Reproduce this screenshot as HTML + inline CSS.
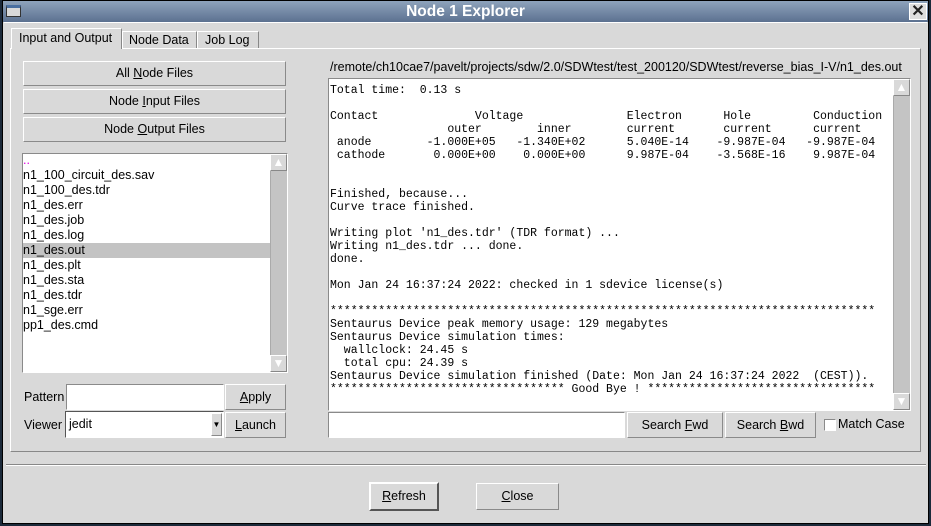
<!DOCTYPE html><html><head><style>
*{box-sizing:border-box;margin:0;padding:0}
body{width:931px;height:526px;background:#1c2a3a;font-family:"Liberation Sans",sans-serif;font-size:12.5px;color:#000;position:relative;overflow:hidden}
.a{position:absolute}
.win{left:2px;top:0;width:927px;height:524px;background:#d9d9d9;border:1px solid #000}
.title{left:3px;top:1px;width:925px;height:21px;background:linear-gradient(#8ea3bc,#5c7190);color:#fff;font-weight:bold;font-size:15.5px;text-align:center;line-height:21px}
.btn{background:#d9d9d9;border:1px solid;border-color:#fff #8a8a8a #8a8a8a #fff;text-align:center;font-size:12.5px}
.sunk{background:#fff;border:1px solid;border-color:#8a8a8a #fff #fff #8a8a8a}
.mono{font-family:"Liberation Mono",monospace;font-size:11.5px;line-height:13px;white-space:pre}
.sb{background:#c4c4c4;border-left:1px solid #aaa}
.arr{width:17px;height:17px;background:#d9d9d9;border:1px solid;border-color:#fff #888 #888 #fff}
</style></head><body>
<div class="a win"></div>
<div class="a title">Node 1 Explorer</div>
<div class="a" style="left:6px;top:5px;width:15px;height:12px;background:#d9d9d9;border:1px solid #333;border-top:3px solid #4a6fa0"></div>
<div class="a" style="left:909px;top:3px;width:18px;height:17px;background:#ddd;border:1px solid #fff;font-size:16px;line-height:15px;text-align:center;color:#222;font-weight:bold">✕</div>
<div class="a" style="left:4px;top:22px;width:923px;height:1px;background:#fff"></div>
<div class="a" style="left:10px;top:48px;width:911px;height:404px;border:1px solid;border-color:#fff #888 #888 #fff"></div>
<div class="a" style="left:11px;top:28px;width:111px;height:21px;background:#d9d9d9;border:1px solid;border-bottom:none;border-color:#fff #888 #888 #fff;padding:2px 0 0 7px">Input and Output</div>
<div class="a" style="left:122px;top:31px;width:75px;height:17px;border:1px solid;border-bottom:none;border-color:#fff #888 #888 #fff;padding:1px 0 0 6px">Node Data</div>
<div class="a" style="left:197px;top:31px;width:62px;height:17px;border:1px solid;border-bottom:none;border-color:#fff #888 #888 #fff;padding:1px 0 0 7px">Job Log</div>
<div class="a btn" style="left:23px;top:61px;width:263px;height:25px;line-height:23px">All <u>N</u>ode Files</div>
<div class="a btn" style="left:23px;top:89px;width:263px;height:25px;line-height:23px">Node <u>I</u>nput Files</div>
<div class="a btn" style="left:23px;top:117px;width:263px;height:25px;line-height:23px">Node <u>O</u>utput Files</div>
<div class="a sunk" style="left:22px;top:153px;width:266px;height:220px"></div>
<div class="a" style="left:23px;top:154px;width:247px;line-height:15px">
<div style="color:#e000e0;height:14px;line-height:12px">..</div>
<div>n1_100_circuit_des.sav</div><div>n1_100_des.tdr</div><div>n1_des.err</div><div>n1_des.job</div><div>n1_des.log</div>
<div style="background:#c3c3c3">n1_des.out</div><div>n1_des.plt</div><div>n1_des.sta</div><div>n1_des.tdr</div><div>n1_sge.err</div><div>pp1_des.cmd</div></div>
<div class="a sb" style="left:270px;top:154px;width:17px;height:218px"></div>
<div class="a arr" style="left:270px;top:154px;font-size:12px;line-height:14px;text-align:center;color:#fff">▲</div>
<div class="a arr" style="left:270px;top:355px;font-size:12px;line-height:14px;text-align:center;color:#fff">▼</div>
<div class="a" style="left:24px;top:390px">Pattern</div>
<div class="a sunk" style="left:66px;top:384px;width:158px;height:26px"></div>
<div class="a btn" style="left:225px;top:384px;width:61px;height:26px;line-height:24px"><u>A</u>pply</div>
<div class="a" style="left:24px;top:418px">Viewer</div>
<div class="a sunk" style="left:65px;top:411px;width:159px;height:27px;border-color:#555 #fff #fff #555;padding:5px 0 0 3px">jedit</div>
<div class="a btn" style="left:211px;top:413px;width:11px;height:23px;font-size:8px;line-height:22px">▼</div>
<div class="a btn" style="left:225px;top:412px;width:61px;height:26px;line-height:24px"><u>L</u>aunch</div>
<div class="a" style="left:330px;top:60px">/remote/ch10cae7/pavelt/projects/sdw/2.0/SDWtest/test_200120/SDWtest/reverse_bias_I-V/n1_des.out</div>
<div class="a sunk" style="left:328px;top:78px;width:583px;height:333px"></div>
<div class="a mono" style="left:330px;top:84px">Total time:  0.13 s

Contact              Voltage               Electron      Hole         Conduction
                 outer        inner        current       current      current
 anode        -1.000E+05   -1.340E+02      5.040E-14    -9.987E-04   -9.987E-04
 cathode       0.000E+00    0.000E+00      9.987E-04    -3.568E-16    9.987E-04


Finished, because...
Curve trace finished.

Writing plot 'n1_des.tdr' (TDR format) ...
Writing n1_des.tdr ... done.
done.

Mon Jan 24 16:37:24 2022: checked in 1 sdevice license(s)

*******************************************************************************
Sentaurus Device peak memory usage: 129 megabytes
Sentaurus Device simulation times:
  wallclock: 24.45 s
  total cpu: 24.39 s
Sentaurus Device simulation finished (Date: Mon Jan 24 16:37:24 2022  (CEST)).
********************************** Good Bye ! *********************************</div>
<div class="a sb" style="left:893px;top:79px;width:17px;height:331px"></div>
<div class="a arr" style="left:893px;top:79px;font-size:12px;line-height:14px;text-align:center;color:#fff">▲</div>
<div class="a arr" style="left:893px;top:393px;font-size:12px;line-height:14px;text-align:center;color:#fff">▼</div>
<div class="a sunk" style="left:328px;top:412px;width:297px;height:26px"></div>
<div class="a btn" style="left:627px;top:412px;width:96px;height:26px;line-height:24px">Search <u>F</u>wd</div>
<div class="a btn" style="left:725px;top:412px;width:91px;height:26px;line-height:24px">Search <u>B</u>wd</div>
<div class="a sunk" style="left:824px;top:419px;width:12px;height:12px"></div>
<div class="a" style="left:838px;top:417px">Match Case</div>
<div class="a" style="left:6px;top:464px;width:920px;height:2px;border-top:1px solid #888;border-bottom:1px solid #fff"></div>
<div class="a btn" style="left:369px;top:482px;width:70px;height:29px;border:2px solid;border-color:#fff #555 #555 #fff;line-height:25px"><u>R</u>efresh</div>
<div class="a btn" style="left:476px;top:483px;width:83px;height:27px;line-height:25px"><u>C</u>lose</div>
</body></html>
